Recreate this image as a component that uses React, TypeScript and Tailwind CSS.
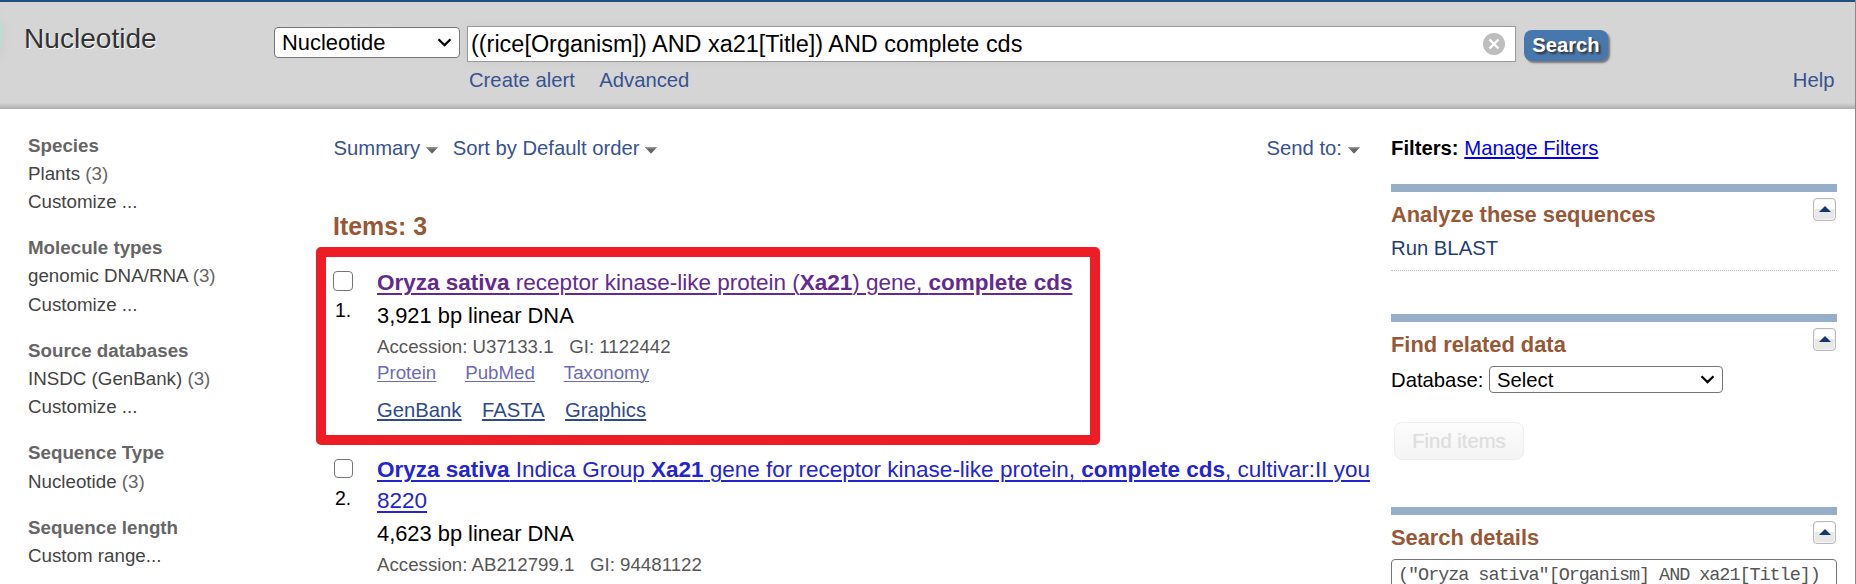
import React from "react";

function Chevron({ className = "" }: { className?: string }) {
  return (
    <svg className={className} width="15" height="10" viewBox="0 0 15 10" fill="none">
      <path d="M1.5 1.3 7.5 7.1 13.5 1.3" stroke="#000" strokeWidth="2.2" />
    </svg>
  );
}

function Caret({ className = "" }: { className?: string }) {
  return (
    <svg className={className} width="12" height="7" viewBox="0 0 12 7">
      <path d="M0 0.3h12L6 6.7z" fill="#666" />
      <path d="M0 0.3h12l-1.2 1.2H1.2z" fill="#999" />
    </svg>
  );
}

function Collapse() {
  return (
    <button className="mt-1.5 mr-px flex h-[23px] w-[23px] justify-center rounded-[4px] border border-[#b8b8b8] bg-linear-to-b from-white from-50% to-[#e8e8e8] to-50% pt-[7px] shadow-[inset_0_0_0_1px_#f4f4f4]">
      <svg width="12" height="6" viewBox="0 0 12 6">
        <path d="M0 6 6 0l6 6z" fill="#15356f" />
      </svg>
    </button>
  );
}

const groups = [
  { title: "Species", items: [["Plants", "(3)"], ["Customize ...", ""]] },
  { title: "Molecule types", items: [["genomic DNA/RNA", "(3)"], ["Customize ...", ""]] },
  { title: "Source databases", items: [["INSDC (GenBank)", "(3)"], ["Customize ...", ""]] },
  { title: "Sequence Type", items: [["Nucleotide", "(3)"]] },
  { title: "Sequence length", items: [["Custom range...", ""]] },
];

function Header() {
  return (
    <header className="relative flex h-[109px] overflow-hidden border-t-2 border-[#205081] bg-[#d5d5d5] bg-linear-to-b from-[#d5d5d5] from-[101px] to-[#adadad]">
      <div className="absolute top-[-6px] -left-[75px] h-[78px] w-[78px] rounded-full bg-[#b9dfd0] shadow-[0_4px_10px_#ccc]" />
      <h1 className="ml-[24px] w-[250px] pt-[21px] text-[28.1px] leading-[32px] text-[#333] [text-shadow:1px_1px_1px_#fff]">
        Nucleotide
      </h1>
      <div className="mt-[25px] flex h-[31px] w-[186px] items-center justify-between rounded-[4px] border border-[#767676] bg-white pr-[7px] pl-[7px] text-[21.9px] text-black">
        <span className="pt-px">Nucleotide</span>
        <Chevron />
      </div>
      <div className="ml-[7px] w-[1049px] pt-[24px]">
        <div className="flex h-[36px] items-center justify-between border border-[#999] bg-white pr-[10px] pl-[3px] text-[23.45px] text-black shadow-[0_0_10px_#ccc]">
          <span className="pt-px">((rice[Organism]) AND xa21[Title]) AND complete cds</span>
          <svg width="22" height="22" viewBox="0 0 22 22">
            <circle cx="11" cy="11" r="11" fill="#bdbdbd" />
            <path d="m6.5 6.5 9 9m0-9-9 9" stroke="#fff" strokeWidth="2.4" />
          </svg>
        </div>
        <nav className="mt-[5px] flex gap-[24.5px] pl-[2px] text-[20.25px] leading-[26px] text-[#385290]">
          <a>Create alert</a>
          <a>Advanced</a>
        </nav>
      </div>
      <button className="mt-[28px] ml-[8px] h-[31px] w-[84px] rounded-[8px] bg-[#4778ad] text-[20.2px] leading-[29px] font-bold text-white shadow-[2px_2px_2px_#777] [text-shadow:2px_2px_2px_#333]">
        Search
      </button>
      <a className="mr-[20.5px] ml-auto pt-[65px] text-[20.25px] leading-[26px] text-[#385290]">Help</a>
    </header>
  );
}

function Sidebar() {
  return (
    <aside className="flex w-[333px] shrink-0 flex-col gap-[18px] pt-[22.6px] pl-[28px] text-[18.75px] leading-[28.2px] text-[#444]">
      {groups.map((g) => (
        <section key={g.title}>
          <h3 className="font-bold text-[#666]">{g.title}</h3>
          {g.items.map(([label, count]) => (
            <p key={label}>
              {label} <span className="text-[#666]">{count}</span>
            </p>
          ))}
        </section>
      ))}
    </aside>
  );
}

function Results() {
  return (
    <main className="relative w-[1058px] shrink-0">
      <div className="absolute top-[138px] -left-[17px] h-[198px] w-[784px] rounded-[5px] border-10 border-[#ee1c24]" />
      <div className="mt-[26px] flex h-[26px] items-center pr-[31px] text-[20.25px] text-[#385290]">
        <a className="pl-[0.5px]">Summary</a>
        <Caret className="mt-[5px] ml-[6px]" />
        <a className="ml-[14.5px]">Sort by Default order</a>
        <Caret className="mt-[5px] ml-[6px]" />
        <a className="ml-auto">Send to:</a>
        <Caret className="mt-[5px] ml-[6px]" />
      </div>
      <h2 className="mt-[49px] text-[24.9px] leading-[32px] font-bold text-[#985735]">Items: 3</h2>

      <article className="mt-[26px] flex">
        <div className="w-[44px] shrink-0 pt-[3px]">
          <div className="h-[20px] w-[20px] rounded-[4px] border-[1.5px] border-[#767676] bg-white" />
          <p className="mt-[7px] pl-[2px] text-[19.5px] leading-[24px] text-black">1.</p>
        </div>
        <div>
          <h3 className="text-[22.5px] leading-[30px] whitespace-nowrap text-[#642a8f] underline decoration-2 underline-offset-[3px]">
            <b>Oryza sativa</b> receptor kinase-like protein (<b>Xa21</b>) gene, <b>complete cds</b>
          </h3>
          <p className="mt-[3px] text-[21.85px] leading-[30px] text-black">3,921 bp linear DNA</p>
          <p className="mt-[3px] text-[18.7px] leading-[26px] whitespace-pre text-[#575757]">Accession: U37133.1   GI: 1122442</p>
          <p className="flex gap-[29px] text-[18.7px] leading-[26px] text-[#6b6bb3] underline decoration-1 underline-offset-[2px]">
            <a>Protein</a>
            <a>PubMed</a>
            <a>Taxonomy</a>
          </p>
          <p className="mt-[11px] flex gap-[20.5px] text-[20.25px] leading-[26px] text-[#2f4a8b] underline decoration-2 underline-offset-[2px]">
            <a>GenBank</a>
            <a>FASTA</a>
            <a>Graphics</a>
          </p>
        </div>
      </article>

      <article className="mt-[31px] flex">
        <div className="w-[44px] shrink-0 pt-[5px]">
          <div className="ml-px h-[19px] w-[19px] rounded-[4px] border-[1.5px] border-[#767676] bg-white" />
          <p className="mt-[8px] pl-[2px] text-[19.5px] leading-[24px] text-black">2.</p>
        </div>
        <div>
          <h3 className="text-[22.5px] leading-[31px] whitespace-nowrap text-[#2424d0] underline decoration-2 underline-offset-[3px]">
            <b>Oryza sativa</b> Indica Group <b>Xa21</b> gene for receptor kinase-like protein, <b>complete cds</b>, cultivar:II you
            <br />
            8220
          </h3>
          <p className="mt-[3px] text-[21.85px] leading-[30px] text-black">4,623 bp linear DNA</p>
          <p className="mt-[3px] text-[18.7px] leading-[26px] whitespace-pre text-[#575757]">Accession: AB212799.1   GI: 94481122</p>
        </div>
      </article>
    </main>
  );
}

function Panel({ title, children, className }: { title: string; children: React.ReactNode; className: string }) {
  return (
    <section className={className}>
      <div className="flex h-[45px] justify-between border-t-8 border-[#97aec8]">
        <h3 className="pt-[8px] text-[21.85px] leading-[30px] font-bold text-[#985735]">{title}</h3>
        <Collapse />
      </div>
      {children}
    </section>
  );
}

function RightRail() {
  return (
    <aside className="w-[446px] shrink-0 text-[20.3px] leading-[26px] text-black">
      <p className="mt-[26px]">
        <b>Filters:</b> <a className="text-[#0000ee] underline decoration-2 underline-offset-[2px]">Manage Filters</a>
      </p>
      <Panel title="Analyze these sequences" className="mt-[23px] h-[130px]">
        <p className="mt-[6px] h-[36px] border-b border-dotted border-[#c4c4c4] text-[#1f3f75]">Run BLAST</p>
      </Panel>
      <Panel title="Find related data" className="h-[193px]">
        <div className="mt-[7px] flex">
          <span className="w-[98px] pt-px">Database:</span>
          <div className="flex h-[27px] w-[234px] items-center justify-between rounded-[4px] border border-[#767676] bg-white px-[7px]">
            <span className="pt-px">Select</span>
            <Chevron />
          </div>
        </div>
        <button className="mt-[29px] ml-[3px] h-[38px] w-[130px] rounded-[8px] border border-[#eee] bg-linear-to-b from-[#fcfcfc] to-[#f4f4f4] text-[#dedede] [text-shadow:0_0_1px_#e2e2e2]">
          Find items
        </button>
      </Panel>
      <Panel title="Search details" className="">
        <div className="mt-[7px] h-[60px] rounded-[4px] border border-[#767676] bg-white pt-[3px] pl-[6px] font-['Liberation_Mono',monospace] text-[18.5px] tracking-[-1.06px] whitespace-nowrap text-[#555]">
          {'("Oryza sativa"[Organism] AND xa21[Title])'}
        </div>
      </Panel>
    </aside>
  );
}

export default function App() {
  return (
    <div className="h-[584px] w-[1856px] overflow-hidden border-r border-[#8a8a8a] bg-white font-['Liberation_Sans',Arial,sans-serif]">
      <Header />
      <div className="flex h-[475px]">
        <Sidebar />
        <Results />
        <RightRail />
      </div>
    </div>
  );
}
